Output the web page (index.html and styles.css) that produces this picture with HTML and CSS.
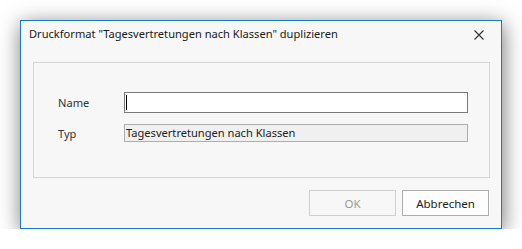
FILE: index.html
```html
<!DOCTYPE html>
<html>
<head>
  <title>Druckformat duplizieren</title>
  <link rel="stylesheet" href="styles.css">
</head>
<body>

<div class="dialog">
  <div class="titlebar">
    <span class="title">Druckformat "Tagesvertretungen nach Klassen" duplizieren</span>
    <span class="close">
      <svg width="10" height="10" viewBox="0 0 10 10">
        <path d="M0.5 0.5 L9.5 9.5 M9.5 0.5 L0.5 9.5" stroke="#333" stroke-width="1.1" fill="none"/>
      </svg>
    </span>
  </div>

  <div class="group">
    <label class="lbl">Name</label>
    <div class="field edit"><span class="caret"></span></div>
    <label class="lbl">Typ</label>
    <div class="field readonly">Tagesvertretungen nach Klassen</div>
  </div>

  <div class="buttons">
    <button class="btn" disabled>OK</button>
    <button class="btn">Abbrechen</button>
  </div>
</div>

</body>
</html>
```

FILE: styles.css
```css
body {
  margin: 0;
  background: #fff;
  font-family: "Noto Sans", "Open Sans", sans-serif;
  font-size: 11.1px;
}

.dialog {
  margin: 20px 0 0 20px;
  width: 480px;
  height: 207px;
  border: 1px solid #1979ca;
  background: #f7f7f7;
  box-shadow: 1px 4px 20px rgba(0, 0, 0, 0.55);
  display: flex;
  flex-direction: column;
}

.titlebar {
  height: 25px;
  display: flex;
  align-items: center;
  justify-content: space-between;
  padding: 0 17px 0 8px;
}

.title {
  color: #1a1a1a;
}

.close {
  display: flex;
  margin-top: 2px;
}

.group {
  margin: 16px 11px 0 12px;
  height: 85px;
  border: 1px solid #d6d6d6;
  padding: 29px 21px 0 24px;
  display: grid;
  grid-template-columns: 66px 1fr;
  grid-template-rows: 21px 18px;
  row-gap: 11px;
  align-items: center;
}

.lbl {
  color: #333;
}

.field {
  box-sizing: border-box;
  height: 100%;
}

.edit {
  background: #fff;
  border: 1px solid #7a7a7a;
  display: flex;
  align-items: center;
  padding-left: 1px;
}

.caret {
  width: 1px;
  height: 15px;
  background: #000;
}

.readonly {
  background: #f0f0f0;
  border: 1px solid #adadad;
  color: #222;
  line-height: 16px;
  padding-left: 1px;
}

.buttons {
  display: flex;
  justify-content: flex-end;
  gap: 6px;
  margin: 12px 12px 0 0;
}

.btn {
  width: 87px;
  height: 26px;
  font-family: inherit;
  font-size: 11.5px;
  color: #222;
  background: #fdfdfd;
  border: 1px solid #adadad;
  padding: 0;
}

.btn:disabled {
  background: #f7f7f7;
  border-color: #cfcfcf;
  color: #9a9a9a;
}
```
